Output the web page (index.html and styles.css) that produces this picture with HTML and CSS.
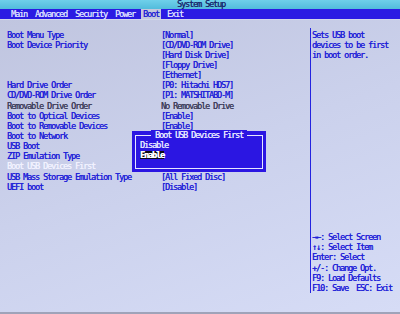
FILE: index.html
```html
<!DOCTYPE html>
<html>
<head>
<meta charset="utf-8">
<title>System Setup</title>
<link rel="stylesheet" href="styles.css">
</head>
<body>
<div class="screen">
    <div class="titlebar">System Setup</div>
    <!-- top menu -->
    <div class="menubar">
        <span class="tab">Main</span>
        <span class="tab">Advanced</span>
        <span class="tab">Security</span>
        <span class="tab">Power</span>
        <span class="tab active">Boot</span>
        <span class="tab">Exit</span>
    </div>
    <div class="content">
        <div class="settings">
            <div class="row"><span class="label">Boot Menu Type</span><span class="value">[Normal]</span></div>
            <div class="row"><span class="label">Boot Device Priority</span><span class="value">[CD/DVD-ROM Drive]</span></div>
            <div class="row"><span class="label"></span><span class="value">[Hard Disk Drive]</span></div>
            <div class="row"><span class="label"></span><span class="value">[Floppy Drive]</span></div>
            <div class="row"><span class="label"></span><span class="value">[Ethernet]</span></div>
            <div class="row"><span class="label">Hard Drive Order</span><span class="value">[P0: Hitachi HDS7]</span></div>
            <div class="row"><span class="label">CD/DVD-ROM Drive Order</span><span class="value">[P1: MATSHITABD-M]</span></div>
            <div class="row disabled"><span class="label">Removable Drive Order</span><span class="value">No Removable Drive</span></div>
            <div class="row"><span class="label">Boot to Optical Devices</span><span class="value">[Enable]</span></div>
            <div class="row"><span class="label">Boot to Removable Devices</span><span class="value">[Enable]</span></div>
            <div class="row"><span class="label">Boot to Network</span><span class="value"></span></div>
            <div class="row"><span class="label">USB Boot</span><span class="value"></span></div>
            <div class="row"><span class="label">ZIP Emulation Type</span><span class="value"></span></div>
            <div class="row selected"><span class="label">Boot USB Devices First</span><span class="value"></span></div>
            <div class="row"><span class="label">USB Mass Storage Emulation Type</span><span class="value">[All Fixed Disc]</span></div>
            <div class="row"><span class="label">UEFI boot</span><span class="value">[Disable]</span></div>

            <!-- option popup -->
            <div class="popup">
                <div class="popup-inner">
                    <div class="popup-title">Boot USB Devices First</div>
                    <div class="option">Disable</div>
                    <div class="option"><span class="current">Enable</span></div>
                </div>
            </div>
        </div>
        <div class="help">
            <div class="help-text">
                Sets USB boot<br>
                devices to be first<br>
                in boot order.
            </div>
            <div class="keys">
                →←: Select Screen<br>
                ↑↓: Select Item<br>
                Enter: Select<br>
                +/-: Change Opt.<br>
                F9: Load Defaults<br>
                F10: Save&nbsp; ESC: Exit
            </div>
        </div>
    </div>
</div>
</body>
</html>
```

FILE: styles.css
```css
body {
    margin: 0;
    background: #c8cde6;
}

.screen {
    width: 400px;
    height: 312px;
    border-bottom: 2px solid #9fa3b9;
    background: linear-gradient(160deg, #bfc4de 0%, #cbd1ec 50%, #d6dcf6 100%);
    font-family: "DejaVu Sans Mono", monospace;
    font-size: 8.5px;
    letter-spacing: -1.12px;
    text-shadow: 0.3px 0 currentColor;
    color: #2222d8;
    white-space: nowrap;
}

.titlebar {
    height: 9px;
    line-height: 9px;
    text-align: center;
    padding-left: 2px;
    background: linear-gradient(#6fd0ea, #52bcdc);
    color: #1b2a6e;
}

.menubar {
    display: flex;
    height: 10px;
    line-height: 10px;
    padding-left: 7px;
    background: #2b1be3;
    border-bottom: 1px solid #d2d6ea;
}

.tab {
    margin: 0 2px;
    padding: 0 2px;
    color: #d8dcff;
}

.tab.active {
    background: #c4c8dc;
    color: #2424d6;
}

.content {
    display: grid;
    grid-template-columns: 310px 1fr;
    padding-top: 8px;
}

.settings {
    position: relative;
    padding: 1.6px 0 0 7px;
}

.row {
    display: flex;
    height: 10.15px;
    line-height: 10.15px;
}

.label {
    width: 154px;
}

.row.disabled {
    color: #3e3e5c;
}

.row.selected .label {
    color: #f2f2ff;
}

.popup {
    position: absolute;
    left: 132px;
    top: 103px;
    width: 128px;
    height: 35px;
    padding: 4px 3px 2px 3px;
    background: #2b16e2;
    color: #e6e6ff;
}

.popup-inner {
    position: relative;
    height: 34px;
    border: 1px solid #e6e6ff;
    padding: 4px 0 0 4px;
    box-sizing: border-box;
}

.popup-title {
    position: absolute;
    top: -6px;
    left: 0;
    right: 0;
    width: max-content;
    margin: 0 auto;
    padding: 0 4px;
    line-height: 10px;
    background: #2b16e2;
}

.option {
    line-height: 10px;
    height: 10px;
}

.current {
    display: inline-block;
    line-height: 8px;
    background: #0c0c1c;
    color: #ffffff;
    font-weight: bold;
}

.help {
    display: flex;
    flex-direction: column;
    justify-content: space-between;
    height: 265px;
    border-left: 1px solid #2424e0;
    padding: 1.6px 0 0 1px;
    box-sizing: border-box;
    line-height: 10.15px;
}
```
